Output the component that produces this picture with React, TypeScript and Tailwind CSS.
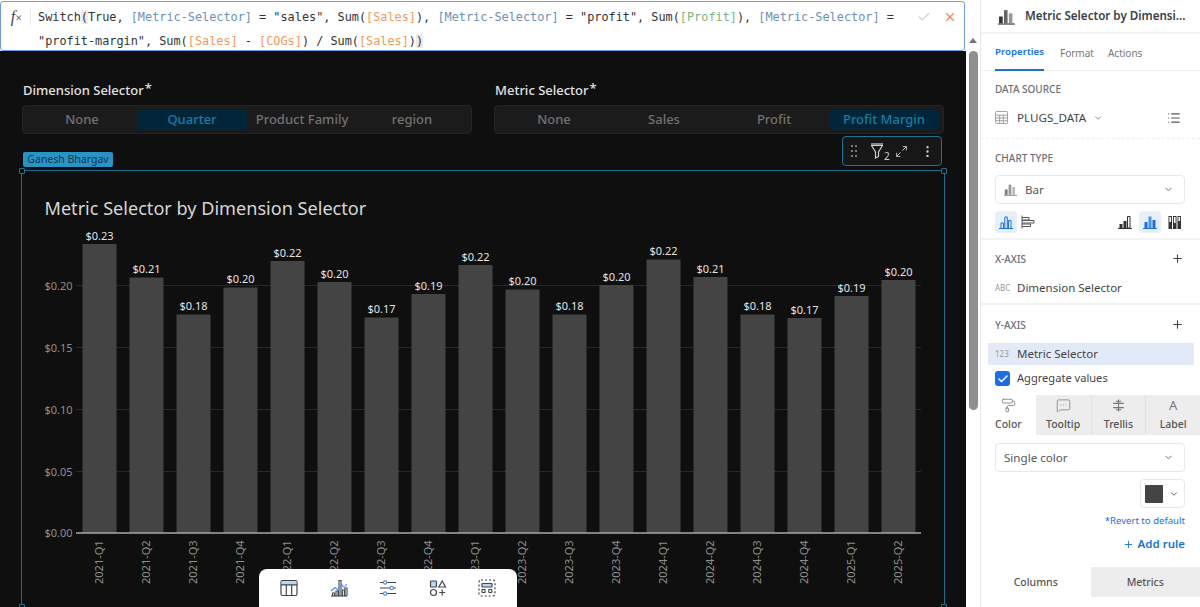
import { Check, ChevronDown, List, Maximize2, MessageSquareMore, MoreVertical, PaintRoller, Plus, X } from "lucide-react";

const NOTO = "font-['Noto_Sans',sans-serif]";

const bars = [
  { q: "2021-Q1", v: "$0.23", top: 244 },
  { q: "2021-Q2", v: "$0.21", top: 277.5 },
  { q: "2021-Q3", v: "$0.18", top: 314.5 },
  { q: "2021-Q4", v: "$0.20", top: 287.5 },
  { q: "2022-Q1", v: "$0.22", top: 261 },
  { q: "2022-Q2", v: "$0.20", top: 282 },
  { q: "2022-Q3", v: "$0.17", top: 317.5 },
  { q: "2022-Q4", v: "$0.19", top: 294 },
  { q: "2023-Q1", v: "$0.22", top: 265 },
  { q: "2023-Q2", v: "$0.20", top: 289.5 },
  { q: "2023-Q3", v: "$0.18", top: 314.5 },
  { q: "2023-Q4", v: "$0.20", top: 285 },
  { q: "2024-Q1", v: "$0.22", top: 259.5 },
  { q: "2024-Q2", v: "$0.21", top: 277 },
  { q: "2024-Q3", v: "$0.18", top: 314.5 },
  { q: "2024-Q4", v: "$0.17", top: 318 },
  { q: "2025-Q1", v: "$0.19", top: 296 },
  { q: "2025-Q2", v: "$0.20", top: 280 }
];

const ticks = [
  { label: "$0.20", y: 285.5 },
  { label: "$0.15", y: 347.5 },
  { label: "$0.10", y: 409.5 },
  { label: "$0.05", y: 471.5 },
  { label: "$0.00", y: 533 }
];

function Chart() {
  return (
    <svg viewBox="22 171 922 436" className="block h-[436px] w-[922px]" style={{ fontFamily: "'Noto Sans', sans-serif" }}>
      <text x="44.5" y="215" fontSize="18.1" fill="#d6d6d6">Metric Selector by Dimension Selector</text>
      {ticks.slice(0, 4).map((t) => (
        <line key={t.y} x1="76" x2="921" y1={t.y} y2={t.y} stroke="#25282b" />
      ))}
      {ticks.map((t) => (
        <text key={t.label} x="72.5" y={t.y + 4} textAnchor="end" fontSize="11" fill="#8e8e8e">{t.label}</text>
      ))}
      {bars.map((b, i) => {
        const x = 82.5 + i * 47;
        return (
          <g key={b.q}>
            <rect x={x} y={b.top} width="34" height={533 - b.top} fill="#444444" />
            <text x={x + 17} y={b.top - 4.5} textAnchor="middle" fontSize="11" fill="#e2e2e2">{b.v}</text>
            <text
              transform={`translate(${x + 20.5} 584) rotate(-90)`}
              fontSize="11"
              fill="#8e8e8e"
            >
              {b.q}
            </text>
          </g>
        );
      })}
      <line x1="76" x2="921" y1="533" y2="533" stroke="#a8a8a8" strokeWidth="1.5" />
    </svg>
  );
}

function Segmented({ label, options, active }: { label: string; options: string[]; active: string }) {
  return (
    <div>
      <div className="flex h-[18px] items-center pl-px text-[13px] font-medium leading-none text-[#e2e2e2]">
        {label}
        <span className="mb-1 ml-px text-[13px] font-medium leading-none">*</span>
      </div>
      <div className="mt-[6px] grid h-[29px] grid-cols-4 rounded border border-[#242424] bg-[#1b1b1b] px-[4px] py-[4px]">
        {options.map((o) => (
          <div
            key={o}
            className={
              o === active
                ? "flex items-center justify-center rounded bg-[#012639] text-[13px] font-medium text-[#1c7ba6]"
                : "flex items-center justify-center text-[13px] font-medium text-[#727272]"
            }
          >
            {o}
          </div>
        ))}
      </div>
    </div>
  );
}

function Handle({ className }: { className: string }) {
  return <div className={`absolute h-[6px] w-[6px] rounded-[1px] border border-[#1f7396] bg-[#0f0f0f] ${className}`} />;
}

function BarIcon({ className = "" }: { className?: string }) {
  return (
    <svg viewBox="0 0 16 16" className={className} fill="currentColor">
      <rect x="1" y="8" width="3.4" height="6.5" />
      <rect x="5.6" y="2" width="3.4" height="12.5" opacity=".75" />
      <rect x="10.2" y="5" width="3.4" height="9.5" opacity=".5" />
      <rect x="0" y="14.6" width="16" height="1" />
    </svg>
  );
}

function BottomToolbar() {
  return (
    <div className="absolute bottom-0 left-[259px] flex h-[38px] w-[258px] items-center justify-between rounded-t-lg bg-white px-[21px] text-[#3f4650]">
      <svg viewBox="0 0 18 18" className="h-[18px] w-[18px]" fill="none" stroke="currentColor" strokeWidth="1.2">
        <rect x="1" y="1.5" width="16" height="15" rx="1.5" />
        <rect x="1.6" y="2" width="14.8" height="3.6" fill="#bcd4f6" stroke="none" />
        <path d="M1 5.8h16M6.3 5.8v10.7M11.7 5.8v10.7" />
      </svg>
      <svg viewBox="0 0 18 18" className="h-[18px] w-[18px]" fill="none" stroke="currentColor" strokeWidth="1.1">
        <path d="M1 17h16" />
        <path d="M2.5 17v-3h2v3M6 17v-5h2v5M9 17V1.5h2V17M12.5 17v-6h2v6M15 17V9h2v8" />
        <path d="M1 12l4-3.5 3 2.5 4-5 2 2.5L17 5" stroke="#5b8def" />
      </svg>
      <svg viewBox="0 0 18 18" className="h-[18px] w-[18px]" fill="none" stroke="currentColor" strokeWidth="1.2">
        <path d="M1 3.5h3.5M8 3.5h9M1 9h10M14.5 9H17M1 14.5h3.5M8 14.5h9" />
        <circle cx="6.2" cy="3.5" r="1.7" stroke="#5b8def" />
        <circle cx="12.8" cy="9" r="1.7" stroke="#5b8def" />
        <circle cx="6.2" cy="14.5" r="1.7" stroke="#5b8def" />
      </svg>
      <svg viewBox="0 0 18 18" className="h-[18px] w-[18px]" fill="none" stroke="currentColor" strokeWidth="1.2">
        <rect x="1.5" y="2" width="6" height="6" rx=".8" fill="#bcd4f6" />
        <path d="M13.2 2l3.3 6h-6.6z" />
        <circle cx="4.5" cy="13.5" r="3" />
        <path d="M13.2 10.5v6M10.2 13.5h6" />
      </svg>
      <svg viewBox="0 0 18 18" className="h-[18px] w-[18px]" fill="none" stroke="currentColor" strokeWidth="1.2">
        <rect x="1" y="1" width="16" height="16" rx="2" strokeDasharray="2 2" />
        <rect x="4" y="4.5" width="10" height="3.5" rx=".6" fill="#bcd4f6" />
        <rect x="4" y="10.5" width="3" height="3" rx=".5" />
        <rect x="10.8" y="10.5" width="3" height="3" rx=".5" />
      </svg>
    </div>
  );
}

function Main() {
  const field = "text-[#6d8fb8]";
  const col = "text-[#f0995c]";
  return (
    <main className="relative flex h-[607px] w-[966px] flex-col bg-[#0f0f0f]">
      <div className="h-[51px] shrink-0 bg-white pt-px">
        <div className="flex h-[50px] w-[965px] rounded-[3px] border border-[#6f9bea] bg-white">
          <div className="mt-[6px] h-[17px] w-[30px] shrink-0 border-r border-[#e8e8e8] pr-[8px] text-right font-['Liberation_Serif',serif] text-[16px] italic leading-[17px] text-[#444]">
            f<span className="text-[12px] not-italic">×</span>
          </div>
          <div className="w-[870px] whitespace-pre pl-[7px] pt-[4px] font-['DejaVu_Sans_Mono',monospace] text-[11.85px] leading-[23.5px] text-[#333]">
            <div>
              Switch<span className="bg-[#ececec]">(</span>True, <span className={field}>[Metric-Selector]</span> = "sales", Sum(<span className={col}>[Sales]</span>), <span className={field}>[Metric-Selector]</span> = "profit", Sum(<span className="text-[#7db37d]">[Profit]</span>), <span className={field}>[Metric-Selector]</span> =
            </div>
            <div>
              "profit-margin", Sum(<span className={col}>[Sales]</span> - <span className={col}>[COGs]</span>) / Sum(<span className={col}>[Sales]</span>)<span className="bg-[#ececec]">)</span>
            </div>
          </div>
          <div className="flex h-[29px] flex-1 items-center justify-between pl-[16px] pr-[7px]">
            <Check size={14} className="text-[#cfcfcf]" />
            <X size={14} strokeWidth={2} className="text-[#f08a4b]" />
          </div>
        </div>
      </div>

      <div className="grid grid-cols-2 gap-x-[22px] pl-[22px] pr-[22px] pt-[30px]">
        <Segmented label="Dimension Selector" options={["None", "Quarter", "Product Family", "region"]} active="Quarter" />
        <Segmented label="Metric Selector" options={["None", "Sales", "Profit", "Profit Margin"]} active="Profit Margin" />
      </div>

      <div className="relative ml-[21px] mt-[36px] w-[924px] flex-1 border border-b-0 border-[#1f6d8f]">
        <Chart />
        <Handle className="-left-[3px] -top-[3px]" />
        <Handle className="-right-[3px] -top-[3px]" />
        <Handle className="-bottom-[3px] -left-[3px]" />
        <Handle className="-bottom-[3px] -right-[3px]" />
        <div className="absolute -top-[19px] left-[1px] flex h-[15px] w-[90px] items-center justify-center rounded-[2px] bg-[#2b93c4] text-[10.5px] leading-none text-[#0d3a52]">
          Ganesh Bhargav
        </div>
        <div className="absolute -top-[35px] right-[2px] flex h-[30px] w-[100px] items-center gap-[8px] rounded border border-[#1f7396] bg-[#171717] pl-[8px] text-[#cfcfcf]">
          <svg viewBox="0 0 6 12" className="h-[12px] w-[6px] shrink-0" fill="#9a9a9a">
            <circle cx="1" cy="1" r="1" /><circle cx="5" cy="1" r="1" />
            <circle cx="1" cy="6" r="1" /><circle cx="5" cy="6" r="1" />
            <circle cx="1" cy="11" r="1" /><circle cx="5" cy="11" r="1" />
          </svg>
          <div className="ml-[5px] flex shrink-0 items-end">
            <svg viewBox="0 0 14 16" className="h-[16px] w-[14px]" fill="none" stroke="currentColor" strokeWidth="1.2">
              <path d="M1 2.5h12M1.5 2.5L5.5 9v6l3-1.5V9l4-6.5" />
              <path d="M1 1h12" />
            </svg>
            <span className="-mb-[2px] text-[10px] leading-none">2</span>
          </div>
          <Maximize2 size={13} strokeWidth={1.6} className="-ml-[3px] shrink-0" />
          <MoreVertical size={15} strokeWidth={1.8} className="ml-[4px] shrink-0" />
        </div>
      </div>

      <BottomToolbar />
    </main>
  );
}

function Scrollbar() {
  return (
    <div className="flex h-[607px] w-[14px] flex-col items-center bg-white pt-[38px]">
      <div className="h-0 w-0 border-x-[4px] border-b-[5px] border-x-transparent border-b-[#777]" />
      <div className="mt-[8px] h-[359px] w-[9px] rounded-full bg-[#8f8f8f]" />
    </div>
  );
}

function SectionLabel({ children }: { children: string }) {
  return <div className="text-[10px] font-medium leading-none text-[#6b6f76]">{children}</div>;
}

function ChartTypeIcon({ active, children }: { active?: boolean; children: React.ReactNode }) {
  return (
    <div className={active ? "flex h-[22px] w-[22px] items-center justify-center rounded bg-[#e6effc] text-[#1a6fe8]" : "flex h-[22px] w-[22px] items-center justify-center text-[#333]"}>
      {children}
    </div>
  );
}

function Panel() {
  return (
    <aside className="flex h-[607px] w-[220px] flex-col border-l border-[#e8e8e8] bg-white text-[#444]">
      <div className="flex h-[34px] items-center gap-[10px] border-b-2 border-[#f1f1f1] pl-[17px]">
        <BarIcon className="h-[17px] w-[17px] shrink-0 text-[#333]" />
        <div className="whitespace-nowrap text-[11.6px] font-semibold text-[#3a3f47]">Metric Selector by Dimensi...</div>
      </div>

      <div className="flex h-[37px] gap-[16px] border-b border-[#eeeeee] pl-[14px] text-[10px]">
        <div className="flex h-[37px] items-center border-b-2 border-[#1a6fe8] pt-[2px] text-[9.7px] font-semibold text-[#1a6fe8]">Properties</div>
        <div className="flex items-center pt-[2px] text-[#777]">Format</div>
        <div className="-ml-[2px] flex items-center pt-[2px] text-[#777]">Actions</div>
      </div>

      <div className="h-[68px] border-b border-dashed border-[#eeeeee] pl-[14px] pr-[15px] pt-[13px]">
        <SectionLabel>DATA SOURCE</SectionLabel>
        <div className="mt-[15px] flex items-center text-[11.6px]">
          <svg viewBox="0 0 14 14" className="mr-[9px] h-[13px] w-[13px] text-[#999]" fill="none" stroke="currentColor" strokeWidth="1">
            <rect x=".5" y=".5" width="13" height="13" rx="1" />
            <path d="M.5 4.5h13M.5 7.5h13M.5 10.5h13M5 4.5v9M9 4.5v9" />
          </svg>
          PLUGS_DATA
          <ChevronDown size={10} className="ml-[7px] text-[#777]" />
          <List size={14} className="ml-auto mr-[4px] text-[#555]" />
        </div>
      </div>

      <div className="h-[101px] border-b-2 border-[#f3f3f3] pl-[14px] pr-[15px] pt-[14px]">
        <SectionLabel>CHART TYPE</SectionLabel>
        <div className="mt-[12px] flex h-[29px] items-center rounded border border-[#e8e8e8] pl-[8px] pr-[10px] text-[11.6px] text-[#555]">
          <BarIcon className="mr-[8px] h-[13px] w-[13px] text-[#777]" />
          Bar
          <ChevronDown size={11} className="ml-auto text-[#666]" />
        </div>
        <div className="mt-[7px] flex items-center">
          <ChartTypeIcon active>
            <svg viewBox="0 0 14 14" className="h-[14px] w-[14px]" fill="none" stroke="currentColor">
              <path d="M0 13.5h14M2 13.5V8h2.5v5.5M5.8 13.5V2h2.5v11.5M9.5 13.5V5.5H12v8" />
            </svg>
          </ChartTypeIcon>
          <ChartTypeIcon>
            <svg viewBox="0 0 14 14" className="h-[14px] w-[14px] text-[#555]" fill="none" stroke="currentColor">
              <path d="M1 .5v13M1 2.5h7v2.5H1M1 5.5h12V8H1M1 9h8.5v2.5H1" />
            </svg>
          </ChartTypeIcon>
          <div className="-mr-px ml-auto flex items-center gap-[3px]">
            <ChartTypeIcon>
              <svg viewBox="0 0 14 14" className="h-[14px] w-[14px]" fill="currentColor">
                <path d="M0 13h14v1H0zM1.5 9h3v4h-3zM5.5 6h3v7h-3z" />
                <path d="M9.5 1.5H12V13H9.5z" fill="none" stroke="currentColor" />
              </svg>
            </ChartTypeIcon>
            <ChartTypeIcon active>
              <svg viewBox="0 0 14 14" className="h-[14px] w-[14px]" fill="currentColor">
                <path d="M0 13h14v1H0zM1.5 7h3v6h-3zM9.5 5h3v8h-3z" />
                <path d="M5.5 1.5h3V13h-3z" opacity=".75" />
              </svg>
            </ChartTypeIcon>
            <ChartTypeIcon>
              <svg viewBox="0 0 14 14" className="h-[14px] w-[14px]" fill="currentColor">
                <path d="M.5 1h3.5v13H.5zM5 1h3.5v13H5zM9.5 1H13v13H9.5z" />
                <path d="M1.4 2h1.7v5H1.4zM5.9 2h1.7v6H5.9zM10.4 2h1.7v4h-1.7z" fill="#fff" />
              </svg>
            </ChartTypeIcon>
          </div>
        </div>
      </div>

      <div className="h-[65px] border-b-2 border-[#f3f3f3] px-[14px] pt-[12px]">
        <div className="flex items-center justify-between">
          <SectionLabel>X-AXIS</SectionLabel>
          <Plus size={13} className="mr-[2px] text-[#444]" />
        </div>
        <div className="mt-[14px] flex items-center text-[11.5px]">
          <span className="w-[22px] text-[8px] text-[#999]">ABC</span>
          Dimension Selector
        </div>
      </div>

      <div className="pt-[13px]">
        <div className="flex items-center justify-between px-[14px]">
          <SectionLabel>Y-AXIS</SectionLabel>
          <Plus size={13} className="mr-[2px] text-[#444]" />
        </div>
        <div className="ml-[7px] mr-[6px] mt-[12px] flex h-[22px] items-center bg-[#e3eaf7] pl-[7px] text-[11.5px]">
          <span className="w-[22px] text-[8px] text-[#999]">123</span>
          Metric Selector
        </div>
        <div className="mt-[6px] flex h-[15px] items-center gap-[7px] pl-[14px] text-[11.1px]">
          <div className="flex h-[15px] w-[15px] items-center justify-center rounded-[3px] bg-[#1a6fe8]">
            <Check size={12} strokeWidth={3} className="text-white" />
          </div>
          Aggregate values
        </div>
      </div>

      <div className="mt-[9px] grid h-[40px] grid-cols-4 text-[10.5px] font-medium text-[#555]">
        <div className="flex flex-col items-center justify-between bg-white pb-[2px] pt-[3px]">
          <PaintRoller size={15} strokeWidth={1.3} className="text-[#777]" />
          Color
        </div>
        <div className="flex flex-col items-center justify-between bg-[#ededed] pb-[2px] pt-[3px]">
          <MessageSquareMore size={15} strokeWidth={1.2} className="text-[#777]" />
          Tooltip
        </div>
        <div className="flex flex-col items-center justify-between border-l border-[#e2e2e2] bg-[#ededed] pb-[2px] pt-[3px]">
          <svg viewBox="0 0 14 14" className="h-[15px] w-[15px] text-[#777]" fill="none" stroke="currentColor">
            <path d="M7 1.5v11M2 5h10M2 9h10M4.5 3h5M4.5 11h5" />
          </svg>
          Trellis
        </div>
        <div className="flex flex-col items-center justify-between border-l border-[#e2e2e2] bg-[#ededed] pb-[2px] pt-[3px]">
          <span className="text-[13px] font-normal leading-[15px] text-[#777]">A</span>
          Label
        </div>
      </div>

      <div className="flex flex-1 flex-col pl-[14px] pr-[15px] pt-[8px]">
        <div className="flex h-[29px] items-center rounded border border-[#e8e8e8] pl-[8px] pr-[10px] text-[11.6px] text-[#555]">
          Single color
          <ChevronDown size={11} className="ml-auto text-[#666]" />
        </div>
        <div className="mt-[7px] flex h-[29px] w-[45px] items-center gap-[6px] self-end rounded border border-[#e8e8e8] pl-[4px]">
          <div className="h-[18px] w-[18px] rounded-[1px] bg-[#444444]" />
          <ChevronDown size={10} className="text-[#444]" />
        </div>
        <div className="mt-[6px] self-end text-[9.6px] leading-[14px] text-[#1a6fe8]">*Revert to default</div>
        <div className="mt-[8px] flex items-center gap-[2px] self-end text-[11.5px] font-semibold leading-[16px] text-[#1a6fe8]">
          <Plus size={11} />
          <span className="ml-[2px]">Add rule</span>
        </div>
      </div>

      <div className="mb-[10px] grid h-[30px] grid-cols-2 text-[10.5px] font-medium text-[#555]">
        <div className="flex items-center justify-center bg-white pt-px">Columns</div>
        <div className="flex items-center justify-center bg-[#ededed] pt-px">Metrics</div>
      </div>
    </aside>
  );
}

export default function App() {
  return (
    <div className={`flex h-[607px] w-[1200px] overflow-hidden bg-white ${NOTO}`}>
      <Main />
      <Scrollbar />
      <Panel />
    </div>
  );
}
